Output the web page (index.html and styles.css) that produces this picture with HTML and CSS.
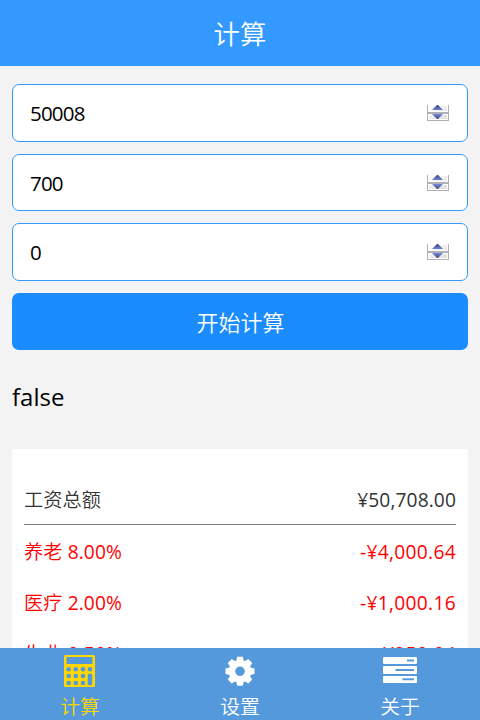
FILE: index.html
```html
<!DOCTYPE html>
<html lang="zh-CN">
<head>
<meta charset="utf-8">
<title>计算</title>
<link rel="stylesheet" href="styles.css">
</head>
<body>
<svg width="0" height="0" class="defs">
  <defs>
    <linearGradient id="face" x1="0" y1="0" x2="1" y2="1"><stop offset="0" stop-color="#fff"/><stop offset="1" stop-color="#ddd"/></linearGradient>
    <linearGradient id="up" x1="0" y1="0" x2="0" y2="1"><stop offset="0" stop-color="#3c4470"/><stop offset="1" stop-color="#6d84d8"/></linearGradient>
    <linearGradient id="down" x1="0" y1="0" x2="0" y2="1"><stop offset="0" stop-color="#7189e0"/><stop offset="1" stop-color="#444b78"/></linearGradient>
    <symbol id="spinner" viewBox="0 0 22 16">
      <path d="M0 0h22v16H0z" fill="#b0b0b8"/>
      <path d="M1 0h20v7H1zM1 9h20v6H1z" fill="#fff"/>
      <path d="M2 1h18v5H2zM2 10h18v4H2z" fill="url(#face)"/>
      <path d="M10 0h1l5 5H5z" fill="url(#up)"/>
      <path d="M5 9h11l-5 5h-1z" fill="url(#down)"/>
    </symbol>
  </defs>
</svg>
<div class="app">
  <header class="header">计算</header>
  <main class="content">
    <div class="field"><input class="value" value="50008"><svg class="spin"><use href="#spinner"/></svg></div>
    <div class="field field-mid"><input class="value" value="700"><svg class="spin"><use href="#spinner"/></svg></div>
    <div class="field"><input class="value" value="0"><svg class="spin"><use href="#spinner"/></svg></div>
    <button class="submit">开始计算</button>
    <p class="status">false</p>
    <section class="card">
      <div class="row total"><span class="label">工资总额</span><span>¥50,708.00</span></div>
      <div class="row"><span><span class="label">养老</span> 8.00%</span><span class="amount">-¥4,000.64</span></div>
      <div class="row"><span><span class="label">医疗</span> 2.00%</span><span class="amount">-¥1,000.16</span></div>
      <div class="row"><span><span class="label">失业</span> 0.50%</span><span class="amount">-¥250.04</span></div>
    </section>
  </main>
  <nav class="tabs">
    <a class="tab active">
      <svg class="icon" viewBox="0 0 34 34">
        <path fill="currentColor" fill-rule="evenodd" d="M2.500 1h28Q32 1 32 2.500v29Q32 33 30.500 33h-28Q1 33 1 31.500v-29Q1 1 2.500 1zM3.500 3v7h26V3z"/>
        <g fill="#5599dd"><circle cx="5.700" cy="15.300" r="2.300"/><circle cx="12.800" cy="15.300" r="2.300"/><circle cx="20" cy="15.300" r="2.300"/><circle cx="27" cy="15.300" r="2.300"/><circle cx="5.700" cy="22" r="2.300"/><circle cx="12.800" cy="22" r="2.300"/><circle cx="20" cy="22" r="2.300"/><circle cx="5.700" cy="29" r="2.300"/><circle cx="12.800" cy="29" r="2.300"/><circle cx="20" cy="29" r="2.300"/><rect x="24.700" y="19.500" width="4.600" height="12" rx="2.300"/></g>
      </svg>
      <span>计算</span>
    </a>
    <a class="tab">
      <svg class="icon" viewBox="0 0 34 34">
        <g transform="translate(17 17.300)" fill="currentColor">
          <circle r="11.300"/>
          <path id="tooth" d="M-3.800-10l1-4.500h5.600l1 4.500v20l-1 4.500h-5.600l-1-4.500z"/>
          <use href="#tooth" transform="rotate(45)"/>
          <use href="#tooth" transform="rotate(90)"/>
          <use href="#tooth" transform="rotate(135)"/>
          <circle r="4.800" fill="#5599dd"/>
        </g>
      </svg>
      <span>设置</span>
    </a>
    <a class="tab">
      <svg class="icon" viewBox="0 0 34 34">
        <g fill="currentColor"><rect y="3" width="34" height="7" rx="1"/><rect y="12" width="34" height="8" rx="1"/><rect y="22" width="34" height="7" rx="1"/></g>
        <path d="M24 6.500h7M12.500 16H31M19.500 25.300H31" stroke="#5599dd" stroke-width="2"/>
      </svg>
      <span>关于</span>
    </a>
  </nav>
</div>
</body>
</html>
```
FILE: styles.css
```css
* { box-sizing: border-box; }
body {
  margin: 0;
  background: #f3f3f3;
  color: #000;
  font-family: "Open Sans", "Noto Sans CJK SC", sans-serif;
}
.defs { display: block; }
.app {
  display: flex;
  flex-direction: column;
  height: 720px;
  overflow: hidden;
}
.header {
  flex: none;
  height: 66px;
  padding-top: 1px;
  background: #3399ff;
  color: #fff;
  font-size: 26.4px;
  font-weight: 350;
  line-height: 67px;
  text-align: center;
}
.content {
  flex: 1;
  min-height: 0;
  overflow: hidden;
  padding: 18px 12px 0;
}
.field {
  display: flex;
  align-items: center;
  height: 58px;
  margin-bottom: 12px;
  padding: 0 18px 0 17px;
  border: 1px solid #3399ff;
  border-radius: 7px;
  background: #fff;
}
.field-mid { height: 57px; }
.value {
  flex: 1;
  min-width: 0;
  padding: 0;
  border: 0;
  outline: 0;
  background: none;
  color: #000;
  font: inherit;
  font-size: 20.5px;
  letter-spacing: -0.8px;
}
.spin { width: 22px; height: 16px; }
.submit {
  display: block;
  width: 100%;
  height: 57px;
  padding: 2px 0 0 1px;
  border: 0;
  border-radius: 7px;
  background: #1a8cff;
  color: #fff;
  font: inherit;
  font-size: 22px;
  font-weight: 350;
  line-height: 55px;
}
.status {
  margin: 27px 0 33px;
  font-size: 24px;
  line-height: 39px;
}
.card {
  padding: 25px 12px;
  background: #fff;
}
.row {
  display: flex;
  justify-content: space-between;
  height: 51px;
  color: #f00;
  font-size: 19.2px;
  letter-spacing: 0.1px;
  line-height: 53px;
}
.label { font-weight: 350; }
.amount { letter-spacing: 0.3px; }
.total {
  border-bottom: 1px solid #808080;
  color: #333;
  line-height: 51px;
}
.tabs {
  display: flex;
  flex: none;
  height: 72px;
  background: #5599dd;
  color: #fff;
}
.tab {
  display: flex;
  flex: 1;
  flex-direction: column;
  align-items: center;
  padding-top: 6px;
  font-size: 19.8px;
  font-weight: 350;
  line-height: 38px;
}
.active { color: #ffd700; }
.icon {
  flex: none;
  width: 34px;
  height: 34px;
}
```
